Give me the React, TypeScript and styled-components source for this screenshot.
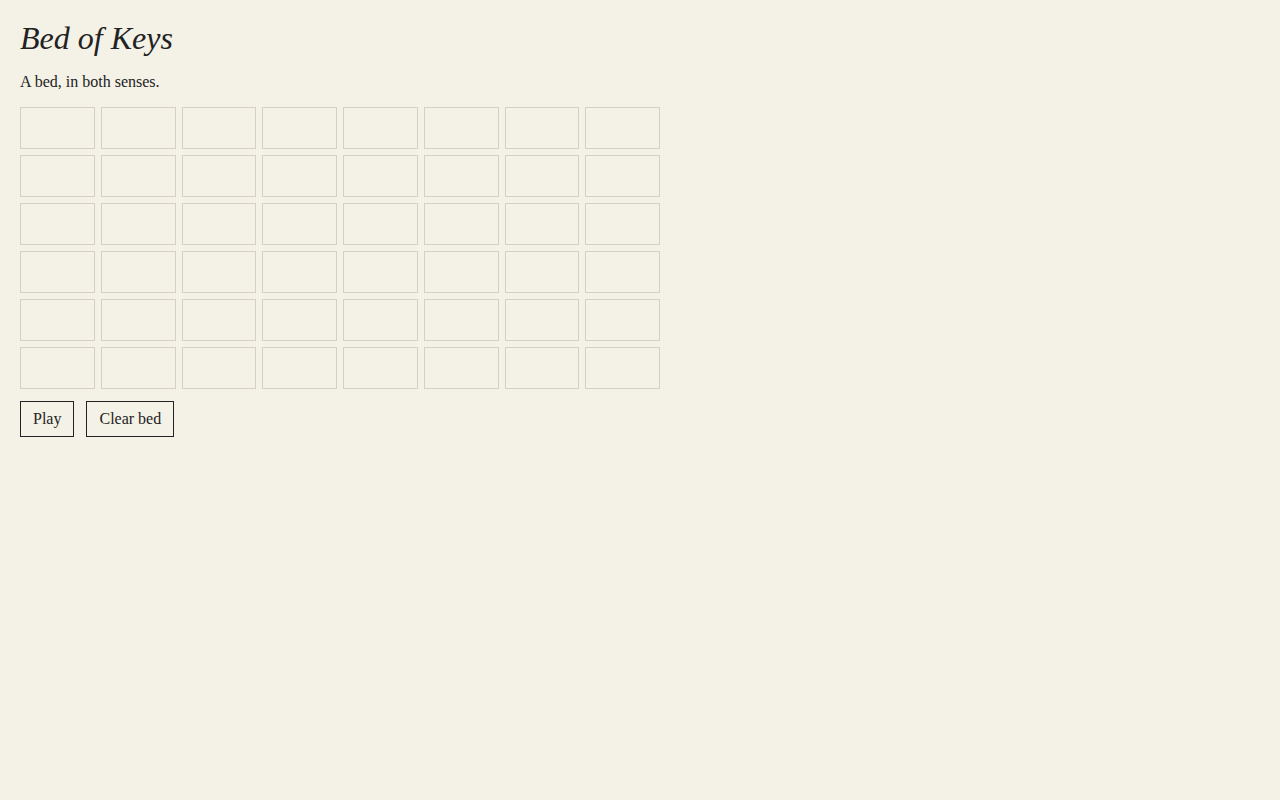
import React from "react";
import styled, { createGlobalStyle } from "styled-components";

const GlobalStyle = createGlobalStyle`
  html, body {
    margin: 0;
    background-color: #f4f1e6;
  }

  body {
    font-family: "Liberation Serif", "Times New Roman", serif;
    color: #222;
  }
`;

const Page = styled.main`
  padding: 20px;
  display: flex;
  flex-direction: column;
`;

const Title = styled.h1`
  font-size: 32px;
  font-style: italic;
  font-weight: 400;
  line-height: 1.15;
  margin: 0 0 16px;
`;

const Subtitle = styled.p`
  font-size: 16px;
  margin: 0 0 16px;
`;

const Bed = styled.div`
  display: grid;
  grid-template-columns: repeat(8, 1fr);
  gap: 6px;
  width: 640px;
  margin-bottom: 12px;
`;

const Cell = styled.button`
  height: 42px;
  border: 1px solid #d4d0c6;
  background: transparent;
  padding: 0;
  cursor: pointer;
`;

const Controls = styled.div`
  display: flex;
  gap: 12px;
`;

const Button = styled.button`
  font-family: "Liberation Serif", "Times New Roman", serif;
  font-size: 16px;
  color: #222;
  background: transparent;
  border: 1px solid #222;
  height: 36px;
  padding: 0 12px;
  cursor: pointer;
`;

const ROWS = 6;
const COLS = 8;

const App: React.FC = () => {
  return (
    <>
      <GlobalStyle />
      <Page>
        <Title>Bed of Keys</Title>
        <Subtitle>A bed, in both senses.</Subtitle>

        <Bed>
          {Array.from({ length: ROWS * COLS }).map((_, idx) => {
            return <Cell key={idx} aria-label={`key ${idx + 1}`} />;
          })}
        </Bed>

        <Controls>
          <Button>Play</Button>
          <Button>Clear bed</Button>
        </Controls>
      </Page>
    </>
  );
};

export default App;
